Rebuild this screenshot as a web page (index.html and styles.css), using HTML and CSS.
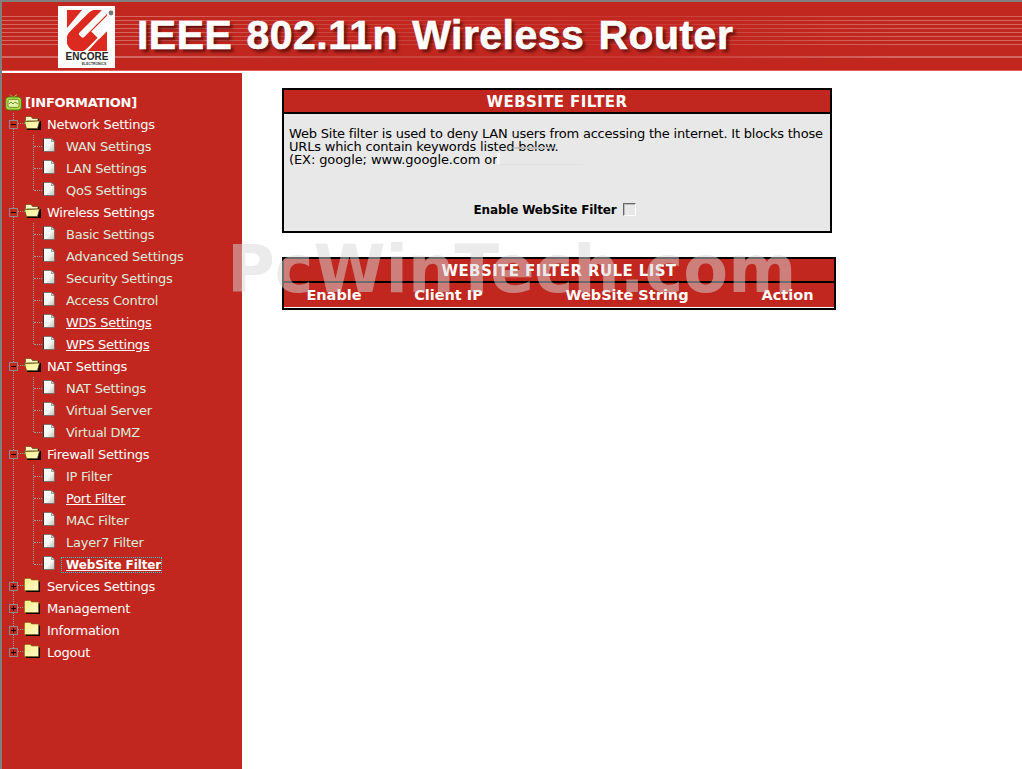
FILE: index.html
```html
<!DOCTYPE html>
<html>
<head>
    <title>Website Filter</title>
    <meta name="viewport" content="width=device-width, initial-scale=1.0">
    <link rel="stylesheet" href="styles.css">
</head>
<body>
    <!-- shared tree icons -->
    <svg class="defs" width="0" height="0">
        <defs>
            <linearGradient id="page-fill" x1="0" y1="0" x2="1" y2="1">
                <stop offset="0" stop-color="#fff"/>
                <stop offset=".55" stop-color="#f6f6f2"/>
                <stop offset="1" stop-color="#bdbdb6"/>
            </linearGradient>
            <linearGradient id="folder-fill" x1="0" y1="0" x2="1" y2="1">
                <stop offset="0" stop-color="#fdf08a"/>
                <stop offset="1" stop-color="#fff8c8"/>
            </linearGradient>
        </defs>
        <symbol id="folder-open" viewBox="0 0 17 14">
            <path d="M3 3 L15 3 L15 5 L17 5 L17 14 L3 14 Z" fill="#000"/>
            <path d="M1.5 4 L1.5 1 L2.5 .5 L7 .5 L8.5 2.5 L14 2.5 L14 5 L3 5 L.5 6 Z" fill="#fff8c4" stroke="#5b4c10" stroke-width=".7"/>
            <path d="M.5 5.5 L15.5 5 L13.5 12.5 L2.5 12.5 Z" fill="url(#folder-fill)" stroke="#5b4c10" stroke-width=".7"/>
        </symbol>
        <symbol id="folder-closed" viewBox="0 0 16 14">
            <path d="M2 3 L14.5 3 L16 4 L16 14 L2 14 Z" fill="#000"/>
            <path d="M.5 12.5 L.5 1.5 L1.5 .5 L6.5 .5 L7.5 2 L14.5 2 L14.5 12.5 Z" fill="url(#folder-fill)" stroke="#7a6a1a" stroke-width=".6"/>
        </symbol>
        <symbol id="page" viewBox="0 0 12 14">
            <path d="M.5 .5 L8.5 .5 L11.5 3.5 L11.5 13.5 L.5 13.5 Z" fill="url(#page-fill)" stroke="#6a6a6a" stroke-width=".8"/>
            <path d="M8.5 .5 L8.5 3.5 L11.5 3.5 Z" fill="#ddd" stroke="#555" stroke-width=".5"/>
            <path d="M.5 .5 L.5 13.5" stroke="#333" stroke-width="1"/>
        </symbol>
    </svg>

    <header class="banner">
        <svg class="logo" width="57" height="62" viewBox="0 0 57 62">
            <defs>
                <clipPath id="logo-square"><rect x="9" y="4" width="40" height="41"/></clipPath>
            </defs>
            <rect width="57" height="62" fill="#fff"/>
            <g clip-path="url(#logo-square)" fill="#dc2a20">
                <path d="M9 4 L24 4 L9 22 Z"/>
                <path d="M49 24 L49 45 L30 45 Z"/>
                <g transform="rotate(-45 29 24)">
                    <rect x="4" y="13" width="50" height="24" rx="12"/>
                    <rect x="20" y="20.5" width="34" height="6.5" rx="2" fill="#fff"/>
                    <rect x="31" y="28" width="26" height="11" fill="#fff"/>
                </g>
            </g>
            <circle cx="53" cy="7" r="2.4" fill="#777"/>
            <text class="logo-name" x="29" y="53.5" text-anchor="middle">ENCORE</text>
            <text class="logo-sub" x="36" y="59" text-anchor="middle">ELECTRONICS</text>
        </svg>
        <h1 class="banner-title">IEEE 802.11n Wireless Router</h1>
    </header>

    <div class="page">
        <nav class="sidebar">
            <a class="info-row" href="#">
                <svg width="17" height="17" viewBox="0 0 17 17">
                    <path d="M5 .5 L8 3.5 L12 .5" fill="none" stroke="#9fd23c" stroke-width="1"/>
                    <rect x=".7" y="3" width="15.6" height="13" rx="3" fill="#b5e04a" stroke="#4b7a12"/>
                    <rect x="3" y="5.4" width="11" height="8" rx="1.5" fill="#e4f5a8" stroke="#4b7a12" stroke-width=".8"/>
                    <path d="M4 10 L6 8 L8 10 L10 8 L13 10" fill="none" stroke="#4b7a12" stroke-width=".8"/>
                </svg>
                <span>[INFORMATION]</span>
            </a>
            <ul class="tree">
                <li>
                    <a class="node" href="#"><span class="toggle minus"></span><svg class="folder"><use href="#folder-open"/></svg>Network Settings</a>
                    <ul class="kids">
                        <li><a class="leaf" href="#"><svg class="page-icon"><use href="#page"/></svg>WAN Settings</a></li>
                        <li><a class="leaf" href="#"><svg class="page-icon"><use href="#page"/></svg>LAN Settings</a></li>
                        <li><a class="leaf" href="#"><svg class="page-icon"><use href="#page"/></svg>QoS Settings</a></li>
                    </ul>
                </li>
                <li>
                    <a class="node" href="#"><span class="toggle minus"></span><svg class="folder"><use href="#folder-open"/></svg>Wireless Settings</a>
                    <ul class="kids">
                        <li><a class="leaf" href="#"><svg class="page-icon"><use href="#page"/></svg>Basic Settings</a></li>
                        <li><a class="leaf" href="#"><svg class="page-icon"><use href="#page"/></svg>Advanced Settings</a></li>
                        <li><a class="leaf" href="#"><svg class="page-icon"><use href="#page"/></svg>Security Settings</a></li>
                        <li><a class="leaf" href="#"><svg class="page-icon"><use href="#page"/></svg>Access Control</a></li>
                        <li><a class="leaf hot" href="#"><svg class="page-icon"><use href="#page"/></svg><span>WDS Settings</span></a></li>
                        <li><a class="leaf hot" href="#"><svg class="page-icon"><use href="#page"/></svg><span>WPS Settings</span></a></li>
                    </ul>
                </li>
                <li>
                    <a class="node" href="#"><span class="toggle minus"></span><svg class="folder"><use href="#folder-open"/></svg>NAT Settings</a>
                    <ul class="kids">
                        <li><a class="leaf" href="#"><svg class="page-icon"><use href="#page"/></svg>NAT Settings</a></li>
                        <li><a class="leaf" href="#"><svg class="page-icon"><use href="#page"/></svg>Virtual Server</a></li>
                        <li><a class="leaf" href="#"><svg class="page-icon"><use href="#page"/></svg>Virtual DMZ</a></li>
                    </ul>
                </li>
                <li>
                    <a class="node" href="#"><span class="toggle minus"></span><svg class="folder"><use href="#folder-open"/></svg>Firewall Settings</a>
                    <ul class="kids">
                        <li><a class="leaf" href="#"><svg class="page-icon"><use href="#page"/></svg>IP Filter</a></li>
                        <li><a class="leaf hot" href="#"><svg class="page-icon"><use href="#page"/></svg><span>Port Filter</span></a></li>
                        <li><a class="leaf" href="#"><svg class="page-icon"><use href="#page"/></svg>MAC Filter</a></li>
                        <li><a class="leaf" href="#"><svg class="page-icon"><use href="#page"/></svg>Layer7 Filter</a></li>
                        <li><a class="leaf current" href="#"><svg class="page-icon"><use href="#page"/></svg><span>WebSite Filter</span></a></li>
                    </ul>
                </li>
                <li><a class="node" href="#"><span class="toggle plus"></span><svg class="folder closed"><use href="#folder-closed"/></svg>Services Settings</a></li>
                <li><a class="node" href="#"><span class="toggle plus"></span><svg class="folder closed"><use href="#folder-closed"/></svg>Management</a></li>
                <li><a class="node" href="#"><span class="toggle plus"></span><svg class="folder closed"><use href="#folder-closed"/></svg>Information</a></li>
                <li><a class="node" href="#"><span class="toggle plus"></span><svg class="folder closed"><use href="#folder-closed"/></svg>Logout</a></li>
            </ul>
        </nav>

        <main class="content">
            <section class="panel filter-panel">
                <h2 class="panel-title">WEBSITE FILTER</h2>
                <div class="panel-body">
                    <p class="panel-text">Web Site filter is used to deny LAN users from accessing the internet. It blocks those URLs which contain keywords listed below.<br><span class="example">(EX: google; www.google.com or</span></p>
                    <span class="smudge smudge-below"></span>
                    <span class="smudge smudge-tail"></span>
                    <label class="enable-row">Enable WebSite Filter <input class="check" type="checkbox"></label>
                </div>
            </section>

            <section class="panel rules-panel">
                <h2 class="panel-title rules-title">WEBSITE FILTER RULE LIST</h2>
                <div class="rules-head">
                    <span>Enable</span>
                    <span>Client IP</span>
                    <span>WebSite String</span>
                    <span>Action</span>
                </div>
            </section>
        </main>
    </div>

    <div class="watermark">PcWinTech.com</div>
</body>
</html>
```

FILE: styles.css
```css
* {
    box-sizing: border-box;
}
html, body {
    height: 100%;
}
body {
    margin: 0;
    padding: 2px 0 0 2px;
    background: #fff;
    font-family: "DejaVu Sans", sans-serif;
    font-size: 13px;
    overflow: hidden;
    position: relative;
    box-shadow: inset 2px 2px 0 #808080;
    display: flex;
    flex-direction: column;
}
.defs {
    position: absolute;
}

/* Banner */
.banner {
    position: relative;
    flex: none;
    display: flex;
    align-items: flex-start;
    height: 71px;
    padding: 4px 0 0 56px;
    background: #c1271f;
    border-bottom: 2px solid #fff;
    box-shadow: inset 0 -1px 0 #e0605a;
}
.banner::before {
    content: "";
    position: absolute;
    left: 0;
    right: 0;
    top: 14px;
    height: 42px;
    background:
        linear-gradient(rgba(255,255,255,.3), rgba(255,255,255,.3)) 0 100% / 100% 2px no-repeat,
        repeating-linear-gradient(to bottom, rgba(255,255,255,.3) 0 1.5px, transparent 1.5px 4px) 0 0 / 100% 31px no-repeat;
    -webkit-mask-image: linear-gradient(to right, #000 0, #000 140px, rgba(0,0,0,.5) 300px, rgba(0,0,0,.25) 640px, #000 900px);
    mask-image: linear-gradient(to right, #000 0, #000 140px, rgba(0,0,0,.5) 300px, rgba(0,0,0,.25) 640px, #000 900px);
}
.logo {
    position: relative;
    flex: none;
}
.logo-name {
    font-family: "Liberation Sans", sans-serif;
    font-size: 10px;
    font-weight: bold;
    fill: #222;
}
.logo-sub {
    font-family: "Liberation Sans", sans-serif;
    font-size: 3.4px;
    font-weight: bold;
    fill: #333;
}
.banner-title {
    position: relative;
    margin: 6px 0 0 22px;
    color: #fff;
    font-family: "Liberation Sans", sans-serif;
    font-size: 41px;
    line-height: 46px;
    font-weight: bold;
    letter-spacing: .45px;
    word-spacing: 2.5px;
    white-space: nowrap;
    -webkit-text-stroke: .6px #fff;
    text-shadow: 3px 3px 3px rgba(70,10,10,.75);
}

/* Page split */
.page {
    flex: 1;
    display: flex;
    min-height: 0;
}
.sidebar {
    flex: none;
    width: 240px;
    padding-top: 18px;
    background: #c1271f;
    letter-spacing: -.25px;
}
.sidebar a {
    text-decoration: none;
}

/* Tree */
.info-row {
    display: flex;
    align-items: center;
    gap: 3px;
    height: 22px;
    padding-left: 3px;
    color: #fff;
    font-weight: bold;
}
.tree, .kids {
    list-style: none;
    margin: 0;
    padding: 0;
    position: relative;
}
.tree::before {
    content: "";
    position: absolute;
    left: 11px;
    top: 0;
    bottom: 11px;
    border-left: 1px dotted #93a3a0;
}
.kids::before {
    content: "";
    position: absolute;
    left: 31px;
    top: 0;
    bottom: 11px;
    border-left: 1px dotted #93a3a0;
}
.node, .leaf {
    position: relative;
    display: flex;
    align-items: center;
    height: 22px;
    white-space: nowrap;
}
.node {
    padding-left: 7px;
    color: #fff;
}
.node::before {
    content: "";
    position: absolute;
    left: 16px;
    width: 7px;
    top: 10px;
    border-top: 1px dotted #93a3a0;
}
.toggle {
    position: relative;
    flex: none;
    width: 9px;
    height: 9px;
    background: #c1271f;
    border: 1px solid #8c8c8c;
    margin: 1px 6px 0 0;
    z-index: 1;
}
.toggle::before {
    content: "";
    position: absolute;
    left: 1px;
    right: 1px;
    top: 3px;
    height: 1px;
    background: #000;
}
.plus::after {
    content: "";
    position: absolute;
    top: 1px;
    bottom: 1px;
    left: 3px;
    width: 1px;
    background: #000;
}
.folder {
    flex: none;
    width: 17px;
    height: 14px;
    margin-right: 6px;
    position: relative;
    top: -1px;
}
.folder.closed {
    width: 16px;
    margin-right: 7px;
}
.leaf {
    padding-left: 41px;
    color: #dcecdc;
}
.leaf::before {
    content: "";
    position: absolute;
    left: 32px;
    width: 10px;
    top: 11px;
    border-top: 1px dotted #93a3a0;
}
.page-icon {
    flex: none;
    width: 12px;
    height: 14px;
    margin-right: 11px;
    position: relative;
    top: -1px;
}
.hot span {
    color: #fff;
    text-decoration: underline;
}
.current span {
    color: #fff;
    font-size: 12px;
    font-weight: bold;
    letter-spacing: -.1px;
    text-decoration: underline;
    margin: 2px 0 0 -4px;
    padding: 0 0 0 4px;
    width: 99px;
    line-height: 14px;
    outline: 1px dotted #2bc8e0;
}

/* Panels */
.content {
    flex: 1;
    padding: 15px 0 0 40px;
}
.panel {
    border: 2px solid #000;
}
.filter-panel {
    width: 550px;
}
.rules-panel {
    width: 554px;
    margin-top: 24px;
}
.panel-title {
    margin: 0;
    height: 24px;
    background: #c1271f;
    border-bottom: 2px solid #000;
    color: #fff;
    font-size: 15px;
    letter-spacing: .4px;
    line-height: 24px;
    font-weight: bold;
    text-align: center;
}
.panel-body {
    position: relative;
    height: 117px;
    padding: 13px 5px 0;
    background: #e8e8e8;
}
.panel-text {
    margin: 0;
    font-size: 13px;
    letter-spacing: -.2px;
    line-height: 13px;
    color: #000;
}
.example {
    letter-spacing: -.1px;
}
.enable-row {
    position: absolute;
    left: 0;
    right: 0;
    top: 89px;
    display: flex;
    justify-content: center;
    align-items: center;
    gap: 7px;
    padding-right: 4px;
    font-size: 12px;
    font-weight: bold;
    letter-spacing: -.17px;
    line-height: 14px;
}
.check {
    appearance: none;
    margin: -2px 0 0;
    width: 13px;
    height: 13px;
    background: #e8e8e8;
    border: 1px solid;
    border-color: #666 #fff #fff #666;
    box-shadow: inset 1px 1px 0 #bbb;
}
.smudge {
    position: absolute;
}
.smudge-below {
    left: 220px;
    top: 33px;
    width: 54px;
    height: 2px;
    background: linear-gradient(to right, transparent, #b4b4b4 30%, #c8c8c8 80%, transparent);
}
.smudge-tail {
    left: 213px;
    top: 39px;
    width: 86px;
    height: 12px;
    border-bottom: 1px solid #e0e0e0;
    border-left: 3px solid #f4f4f4;
}
.rules-title {
    line-height: 24px;
}
.rules-head {
    display: grid;
    grid-template-columns: 100px 129px 228px 1fr;
    height: 25px;
    background: #c1271f;
    border-bottom: 1px solid #fff;
    color: #fff;
    font-size: 14.5px;
    font-weight: bold;
    line-height: 24px;
    text-align: center;
}

/* Site stamp over the screen */
.watermark {
    position: absolute;
    left: 227px;
    top: 232px;
    color: rgba(215,215,215,.5);
    font-size: 65.3px;
    line-height: 74px;
    font-weight: bold;
    white-space: nowrap;
    pointer-events: none;
}
```
